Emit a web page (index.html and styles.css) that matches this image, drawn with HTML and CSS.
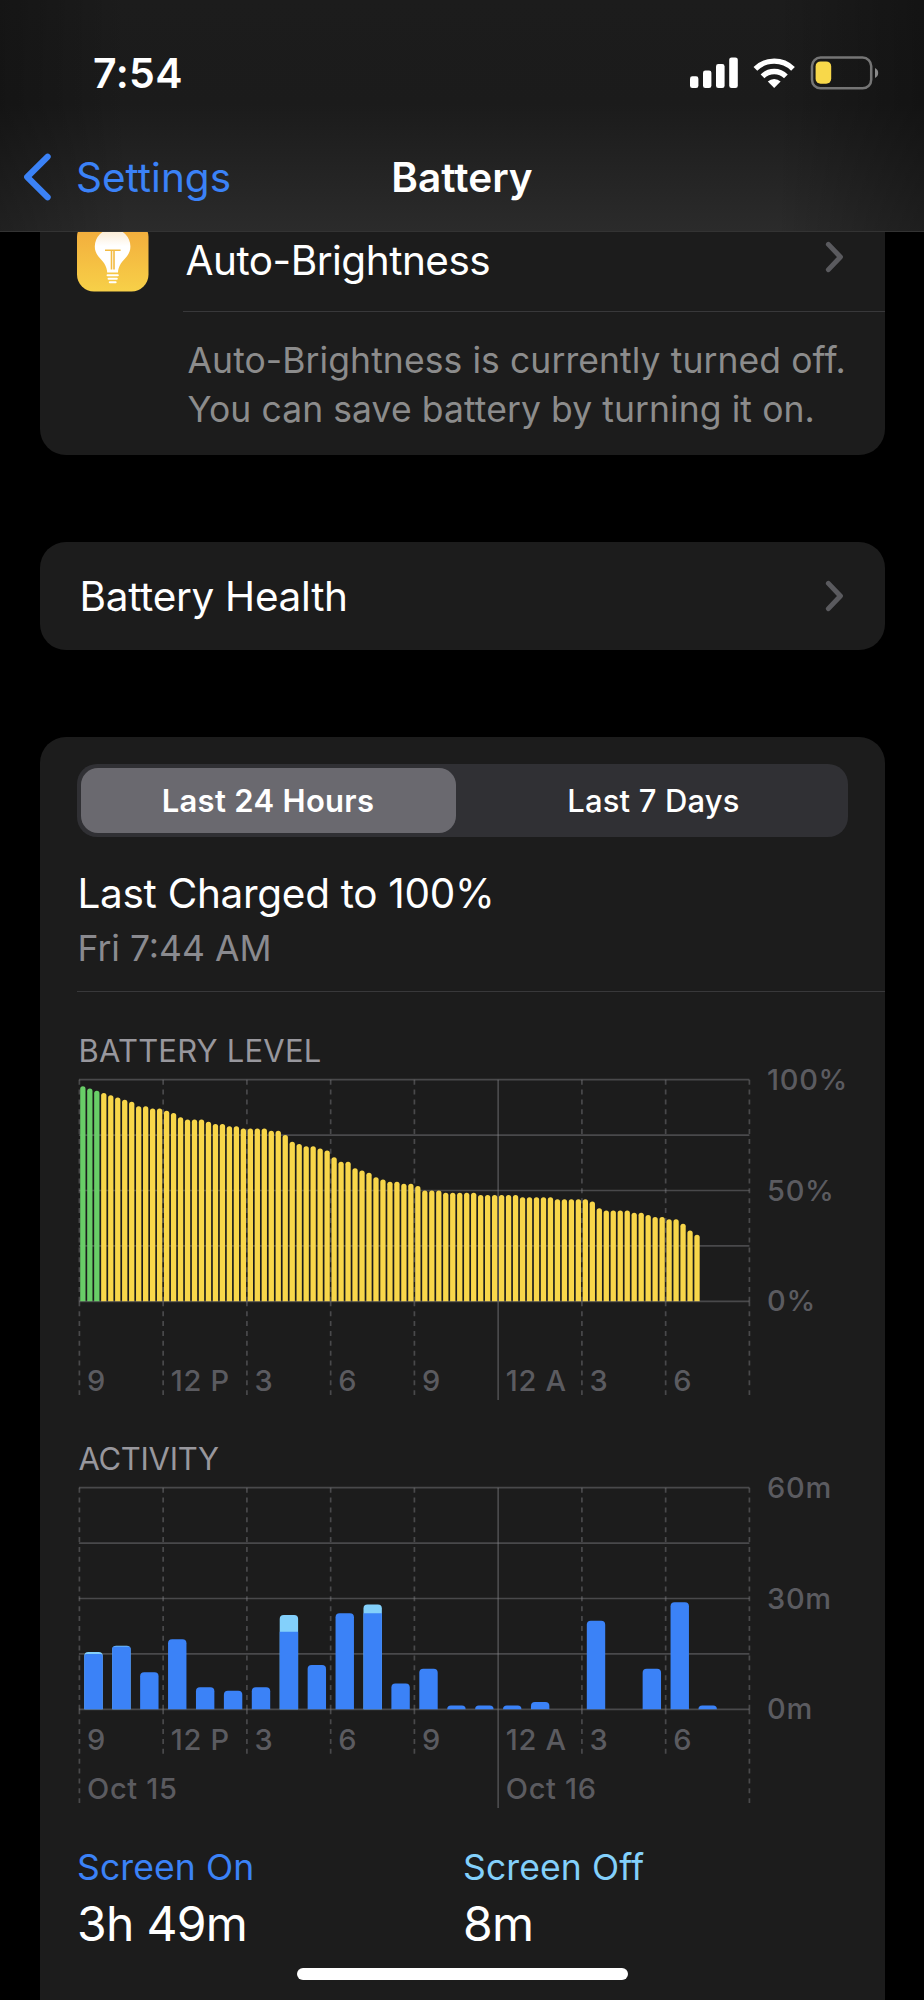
FILE: index.html
```html
<!DOCTYPE html>
<html lang="en">
<head>
    <meta charset="UTF-8">
    <meta name="viewport" content="width=device-width, initial-scale=1.0">
    <title>Battery</title>
    <link rel="stylesheet" href="styles.css">
</head>
<body>
    <div class="screen">
        <header class="top">
            <div class="status-bar">
                <div class="time">7:54</div>
                <svg class="status-icons" width="190" height="36" viewBox="0 0 190 36">
                    <g fill="#fff">
                        <rect x="0" y="21.3" width="8.4" height="11.8" rx="2.4"/>
                        <rect x="13" y="15.4" width="8.4" height="17.7" rx="2.4"/>
                        <rect x="26" y="9" width="8.6" height="24.1" rx="2.4"/>
                        <rect x="39.2" y="2.4" width="8.6" height="30.7" rx="2.4"/>
                        <path d="M84.2 33 L77.8 26.6 A9.2 9.2 0 0 1 90.6 26.6 Z"/>
                    </g>
                    <g fill="none" stroke="#fff" stroke-width="5.3">
                        <path d="M72.5 21.3 A16.6 16.6 0 0 1 95.9 21.3"/>
                        <path d="M65.4 13.9 A26.8 26.8 0 0 1 103 13.9"/>
                    </g>
                    <rect x="122" y="2.5" width="59.2" height="30.8" rx="8.6" fill="none" stroke="#757575" stroke-width="2.5"/>
                    <rect x="125.6" y="6.4" width="15.6" height="22.4" rx="5" fill="#f8d84a"/>
                    <path d="M185 13 Q188.2 14.6 188.2 18 T185 23 Z" fill="#8a8a8a"/>
                </svg>
            </div>
            <div class="nav">
                <div class="back">
                    <svg width="30" height="48" viewBox="0 0 30 48">
                        <path d="M25.6 3.8 L5.2 24 L25.6 44.2" fill="none" stroke="#3b82f7" stroke-width="6.2" stroke-linecap="round" stroke-linejoin="round"/>
                    </svg>
                    <span>Settings</span>
                </div>
                <h1>Battery</h1>
            </div>
        </header>

        <main>
            <section class="card suggestion">
                <div class="row">
                    <svg class="app-icon" width="72" height="72" viewBox="0 0 72 72">
                        <defs>
                            <linearGradient id="tile" x1="0" y1="0" x2="0" y2="1">
                                <stop offset="0" stop-color="#f2a83b"/>
                                <stop offset="1" stop-color="#f7d048"/>
                            </linearGradient>
                            <linearGradient id="glass" x1="0" y1="0" x2="0" y2="1">
                                <stop offset="0" stop-color="#fbe9cd"/>
                                <stop offset=".4" stop-color="#fff"/>
                            </linearGradient>
                        </defs>
                        <rect width="71.5" height="71.5" rx="17" fill="url(#tile)"/>
                        <path d="M30.2 52.6 C30 47 27.4 43 23.6 39 C20 35.4 17.8 31.5 17.8 26.5 A17.8 17.8 0 0 1 53.4 26.5 C53.4 31.5 51.2 35.4 47.6 39 C43.8 43 41.2 47 41 52.6 Z" fill="url(#glass)"/>
                        <path d="M28 30.3 H43.6 M34.5 30.3 V49.4 M37 30.3 V49.4" stroke="#f3bb42" stroke-width="1.6" fill="none"/>
                        <path d="M30.6 55.2 H40.8 M31.6 58.8 H39.8 M32.8 62.2 H38.6" stroke="#fff" stroke-width="2.1" stroke-linecap="round"/>
                    </svg>
                    <span class="row-title">Auto-Brightness</span>
                    <svg class="chevron" width="20" height="32" viewBox="0 0 20 32">
                        <path d="M3.4 3.4 L15.4 16 L3.4 28.6" />
                    </svg>
                </div>
                <p class="hint">Auto-Brightness is currently turned off.<br>You can save battery by turning it on.</p>
            </section>

            <section class="card health">
                <span class="row-title">Battery Health</span>
                <svg class="chevron" width="20" height="32" viewBox="0 0 20 32">
                    <path d="M3.4 3.4 L15.4 16 L3.4 28.6" />
                </svg>
            </section>

            <section class="card usage">
                <div class="segments">
                    <button class="segment active">Last 24 Hours</button>
                    <button class="segment">Last 7 Days</button>
                </div>
                <div class="last-charged">
                    <div class="charged-title">Last Charged to 100%</div>
                    <div class="charged-time">Fri 7:44 AM</div>
                </div>

                <h2>BATTERY LEVEL</h2>
                <svg class="chart" id="levelChart" width="800" height="340"></svg>

                <h2 class="activity-title">ACTIVITY</h2>
                <svg class="chart" id="activityChart" width="800" height="342"></svg>

                <div class="stats">
                    <div class="stat">
                        <div class="stat-label on">Screen On</div>
                        <div class="stat-value">3h 49m</div>
                    </div>
                    <div class="stat">
                        <div class="stat-label off">Screen Off</div>
                        <div class="stat-value">8m</div>
                    </div>
                </div>
            </section>
        </main>
        <div class="home-indicator"></div>
    </div>

    <script src="charts.js"></script>
</body>
</html>
```
FILE: charts.js
```js
const LEFT = 2.4;
const TOP = 9.7;
const WIDTH = 670;
const HEIGHT = 221.6;
const COL = WIDTH / 8;
const HOURS = ['9', '12 P', '3', '6', '9', '12 A', '3', '6'];

// One reading every 15 minutes, in percent
const levels = [
    97, 96, 95, 94, 93, 92, 91, 90, 88, 88, 87, 87,
    86, 85, 83, 82, 82, 82, 81, 80, 80, 79, 79, 78,
    78, 78, 78, 77, 77, 75, 72, 71, 70, 70, 69, 68,
    65, 63, 63, 60, 59, 58, 56, 55, 54, 54, 53, 53,
    52, 50, 50, 50, 49, 49, 49, 49, 49, 48, 48, 48,
    48, 48, 48, 47, 47, 47, 47, 47, 46, 46, 46, 46,
    46, 45, 42, 41, 41, 41, 41, 40, 40, 39, 38, 38,
    37, 37, 35, 32, 30
];

// Minutes per hour: [screen on, screen off]
const activity = [
    [15, 0.5], [17, 0.2], [10, 0], [19, 0], [6, 0], [5, 0],
    [6, 0], [21, 4.5], [12, 0], [26, 0], [26, 2.4], [7, 0],
    [11, 0], [1, 0], [1, 0], [1, 0], [2, 0], [0, 0],
    [24, 0], [0, 0], [11, 0], [29, 0], [1, 0], [0, 0]
];

function add(svg, tag, attrs, text) {
    const el = document.createElementNS('http://www.w3.org/2000/svg', tag);
    for (const key in attrs) {
        el.setAttribute(key, attrs[key]);
    }
    if (text) el.textContent = text;
    svg.appendChild(el);
}

function drawGrid(svg, scale, hourY, lineEnds) {
    const bottom = TOP + HEIGHT;
    for (let i = 0; i <= 4; i++) {
        const y = TOP + HEIGHT * i / 4;
        add(svg, 'line', { class: 'grid', x1: LEFT - 0.5, x2: LEFT + WIDTH, y1: y, y2: y });
    }
    for (let i = 0; i <= 8; i++) {
        const x = LEFT + COL * i;
        const type = i === 5 ? 'grid' : 'grid dashed';
        // the dashes start over below the baseline
        add(svg, 'line', { class: type, x1: x, x2: x, y1: TOP, y2: bottom });
        add(svg, 'line', { class: type, x1: x, x2: x, y1: bottom, y2: lineEnds[i] });
        if (i < 8) {
            add(svg, 'text', { class: 'axis', x: x + 7.6, y: hourY }, HOURS[i]);
        }
    }
    scale.forEach((label, i) => {
        add(svg, 'text', { class: 'axis', x: 690, y: TOP + HEIGHT * i / 2 + 10 }, label);
    });
}

// Column with only the top corners rounded
function column(x, y, w, bottom, r) {
    r = Math.min(r, bottom - y);
    return `M${x} ${bottom} V${y + r} Q${x} ${y} ${x + r} ${y} H${x + w - r} Q${x + w} ${y} ${x + w} ${y + r} V${bottom} Z`;
}

function drawLevels() {
    const svg = document.getElementById('levelChart');
    const bottom = TOP + HEIGHT;
    drawGrid(svg, ['100%', '50%', '0%'], 321, [325, 325, 325, 325, 325, 330, 325, 325, 325]);
    levels.forEach((level, i) => {
        add(svg, 'path', {
            class: i < 3 ? 'charging' : 'level',
            d: column(LEFT + 0.8 + i * COL / 12, bottom - HEIGHT * level / 100, 5.3, bottom, 2.6)
        });
    });
}

function drawActivity() {
    const svg = document.getElementById('activityChart');
    const bottom = TOP + HEIGHT;
    drawGrid(svg, ['60m', '30m', '0m'], 271.8, [325, 276, 276, 276, 276, 330, 276, 276, 325]);
    add(svg, 'text', { class: 'axis', x: LEFT + 7.6, y: 321 }, 'Oct 15');
    add(svg, 'text', { class: 'axis', x: LEFT + COL * 5 + 7.6, y: 321 }, 'Oct 16');
    activity.forEach(([on, off], i) => {
        if (!on) return;
        const x = LEFT + 4.9 + i * COL / 3;
        const total = bottom - HEIGHT * (on + off) / 60;
        const onTop = bottom - HEIGHT * on / 60;
        add(svg, 'path', { class: off ? 'off-bar' : 'on-bar', d: column(x, total, 18.4, bottom, 4) });
        if (off) {
            add(svg, 'path', { class: 'on-bar', d: column(x, onTop, 18.4, bottom, off < 1 ? 2 : 0) });
        }
    });
}

drawLevels();
drawActivity();
```
FILE: styles.css
```css
* {
    margin: 0;
    padding: 0;
    box-sizing: border-box;
}

body {
    background: #000;
    color: #fff;
    font-family: Inter, 'Liberation Sans', sans-serif;
}

svg {
    display: block;
    flex-shrink: 0;
}

.screen {
    position: relative;
    width: 924px;
    height: 2000px;
    overflow: hidden;
}

/* Header */
.top {
    position: relative;
    z-index: 1;
    height: 232px;
    border-bottom: 1px solid #333;
    background:
        linear-gradient(90deg, rgba(0, 0, 0, 0.25), transparent 14%, transparent 84%, rgba(0, 0, 0, 0.3)),
        linear-gradient(#1c1c1c, #1b1b1b 45%, #2b2b2b);
}

.status-bar {
    display: flex;
    justify-content: space-between;
    height: 122px;
    padding: 49px 44px 0 93px;
}

.time {
    font-size: 41px;
    font-weight: 600;
    line-height: 49px;
    letter-spacing: 0.4px;
}

.status-icons {
    margin-top: 6px;
}

.nav {
    display: grid;
    grid-template-columns: 1fr auto 1fr;
    align-items: center;
    height: 110px;
    padding: 0 22px;
}

.back {
    display: flex;
    align-items: center;
    gap: 24px;
    color: #3b82f7;
    font-size: 40.5px;
}

h1 {
    font-size: 40.5px;
    font-weight: 600;
}

/* Cards */
.card {
    margin: 0 39.5px;
    background: #1c1c1c;
    border-radius: 26px;
}

.row-title {
    flex: 1;
    font-size: 40.5px;
    line-height: 48px;
    letter-spacing: -0.5px;
}

.chevron path {
    fill: none;
    stroke: #5a5a5e;
    stroke-width: 5;
    stroke-linecap: round;
    stroke-linejoin: round;
}

.suggestion {
    height: 255px;
    margin-top: -32px;
    border-radius: 0 0 26px 26px;
}

.row {
    display: flex;
    height: 111px;
    margin-left: 37px;
    padding: 20px 40px 0 0;
}

.row .row-title {
    margin: 17px 0 0 37px;
}

.row .chevron {
    margin-top: 21px;
}

.hint {
    margin-left: 143px;
    padding: 24px 0 0 5px;
    border-top: 1px solid #38383a;
    color: #8c8c8c;
    font-size: 35.5px;
    line-height: 49px;
    letter-spacing: 0.08px;
    white-space: nowrap;
}

.health {
    display: flex;
    align-items: center;
    height: 108px;
    margin-top: 87px;
    padding: 0 40px;
}

.health .row-title {
    margin-top: 2px;
    letter-spacing: -0.3px;
}

.usage {
    height: 1290px;
    margin-top: 87px;
    padding: 27px 0 0 37px;
}

.segments {
    display: flex;
    width: 771px;
    height: 73px;
    padding: 4px;
    background: #303034;
    border-radius: 20px;
}

.segment {
    flex: 1;
    padding-left: 8px;
    border: none;
    background: none;
    border-radius: 17px;
    color: #fff;
    font-family: inherit;
    font-size: 31px;
    font-weight: 500;
    letter-spacing: 0.15px;
}

.segment.active {
    flex: 0 0 375px;
    padding: 0;
    background: #6a696f;
    font-weight: 600;
    letter-spacing: 0.3px;
}

.last-charged {
    height: 155px;
    padding: 33px 0 0 1px;
    border-bottom: 1px solid #38383a;
}

.charged-title {
    font-size: 40.5px;
    line-height: 48px;
    letter-spacing: -0.3px;
}

.charged-time {
    margin-top: 9px;
    color: #8a8a8f;
    font-size: 35.5px;
    line-height: 44px;
}

h2 {
    position: relative;
    top: 1px;
    margin: 38px 0 0 2px;
    color: #98979d;
    font-size: 31px;
    font-weight: 400;
    line-height: 40px;
    letter-spacing: 0.2px;
}

h2.activity-title {
    margin-top: 28px;
    letter-spacing: -0.3px;
}

/* Charts */
.chart {
    overflow: visible;
}

.grid {
    stroke: #88888c;
    stroke-opacity: 0.42;
    stroke-width: 1.7;
}

.dashed {
    stroke-dasharray: 5 4.87;
}

.axis {
    fill: #5b5b60;
    font-size: 29px;
    font-weight: 500;
    letter-spacing: 0.7px;
}

.charging {
    fill: #68ce67;
}

.level {
    fill: #f8d64a;
}

.on-bar {
    fill: #3b82f7;
}

.off-bar {
    fill: #83d0fb;
}

/* Totals */
.stats {
    display: flex;
    margin-top: 26px;
}

.stat {
    width: 386px;
    padding-left: 0.5px;
}

.stat-label {
    font-size: 35.5px;
    line-height: 44px;
    letter-spacing: 0.1px;
}

.stat-label.on {
    color: #3b82f7;
}

.stat-label.off {
    color: #83d0fb;
}

.stat-value {
    margin-top: 4px;
    font-size: 48px;
    line-height: 60px;
    letter-spacing: -0.7px;
}

.home-indicator {
    position: absolute;
    left: 297px;
    bottom: 20px;
    width: 331px;
    height: 12px;
    background: #fff;
    border-radius: 6px;
}
```
